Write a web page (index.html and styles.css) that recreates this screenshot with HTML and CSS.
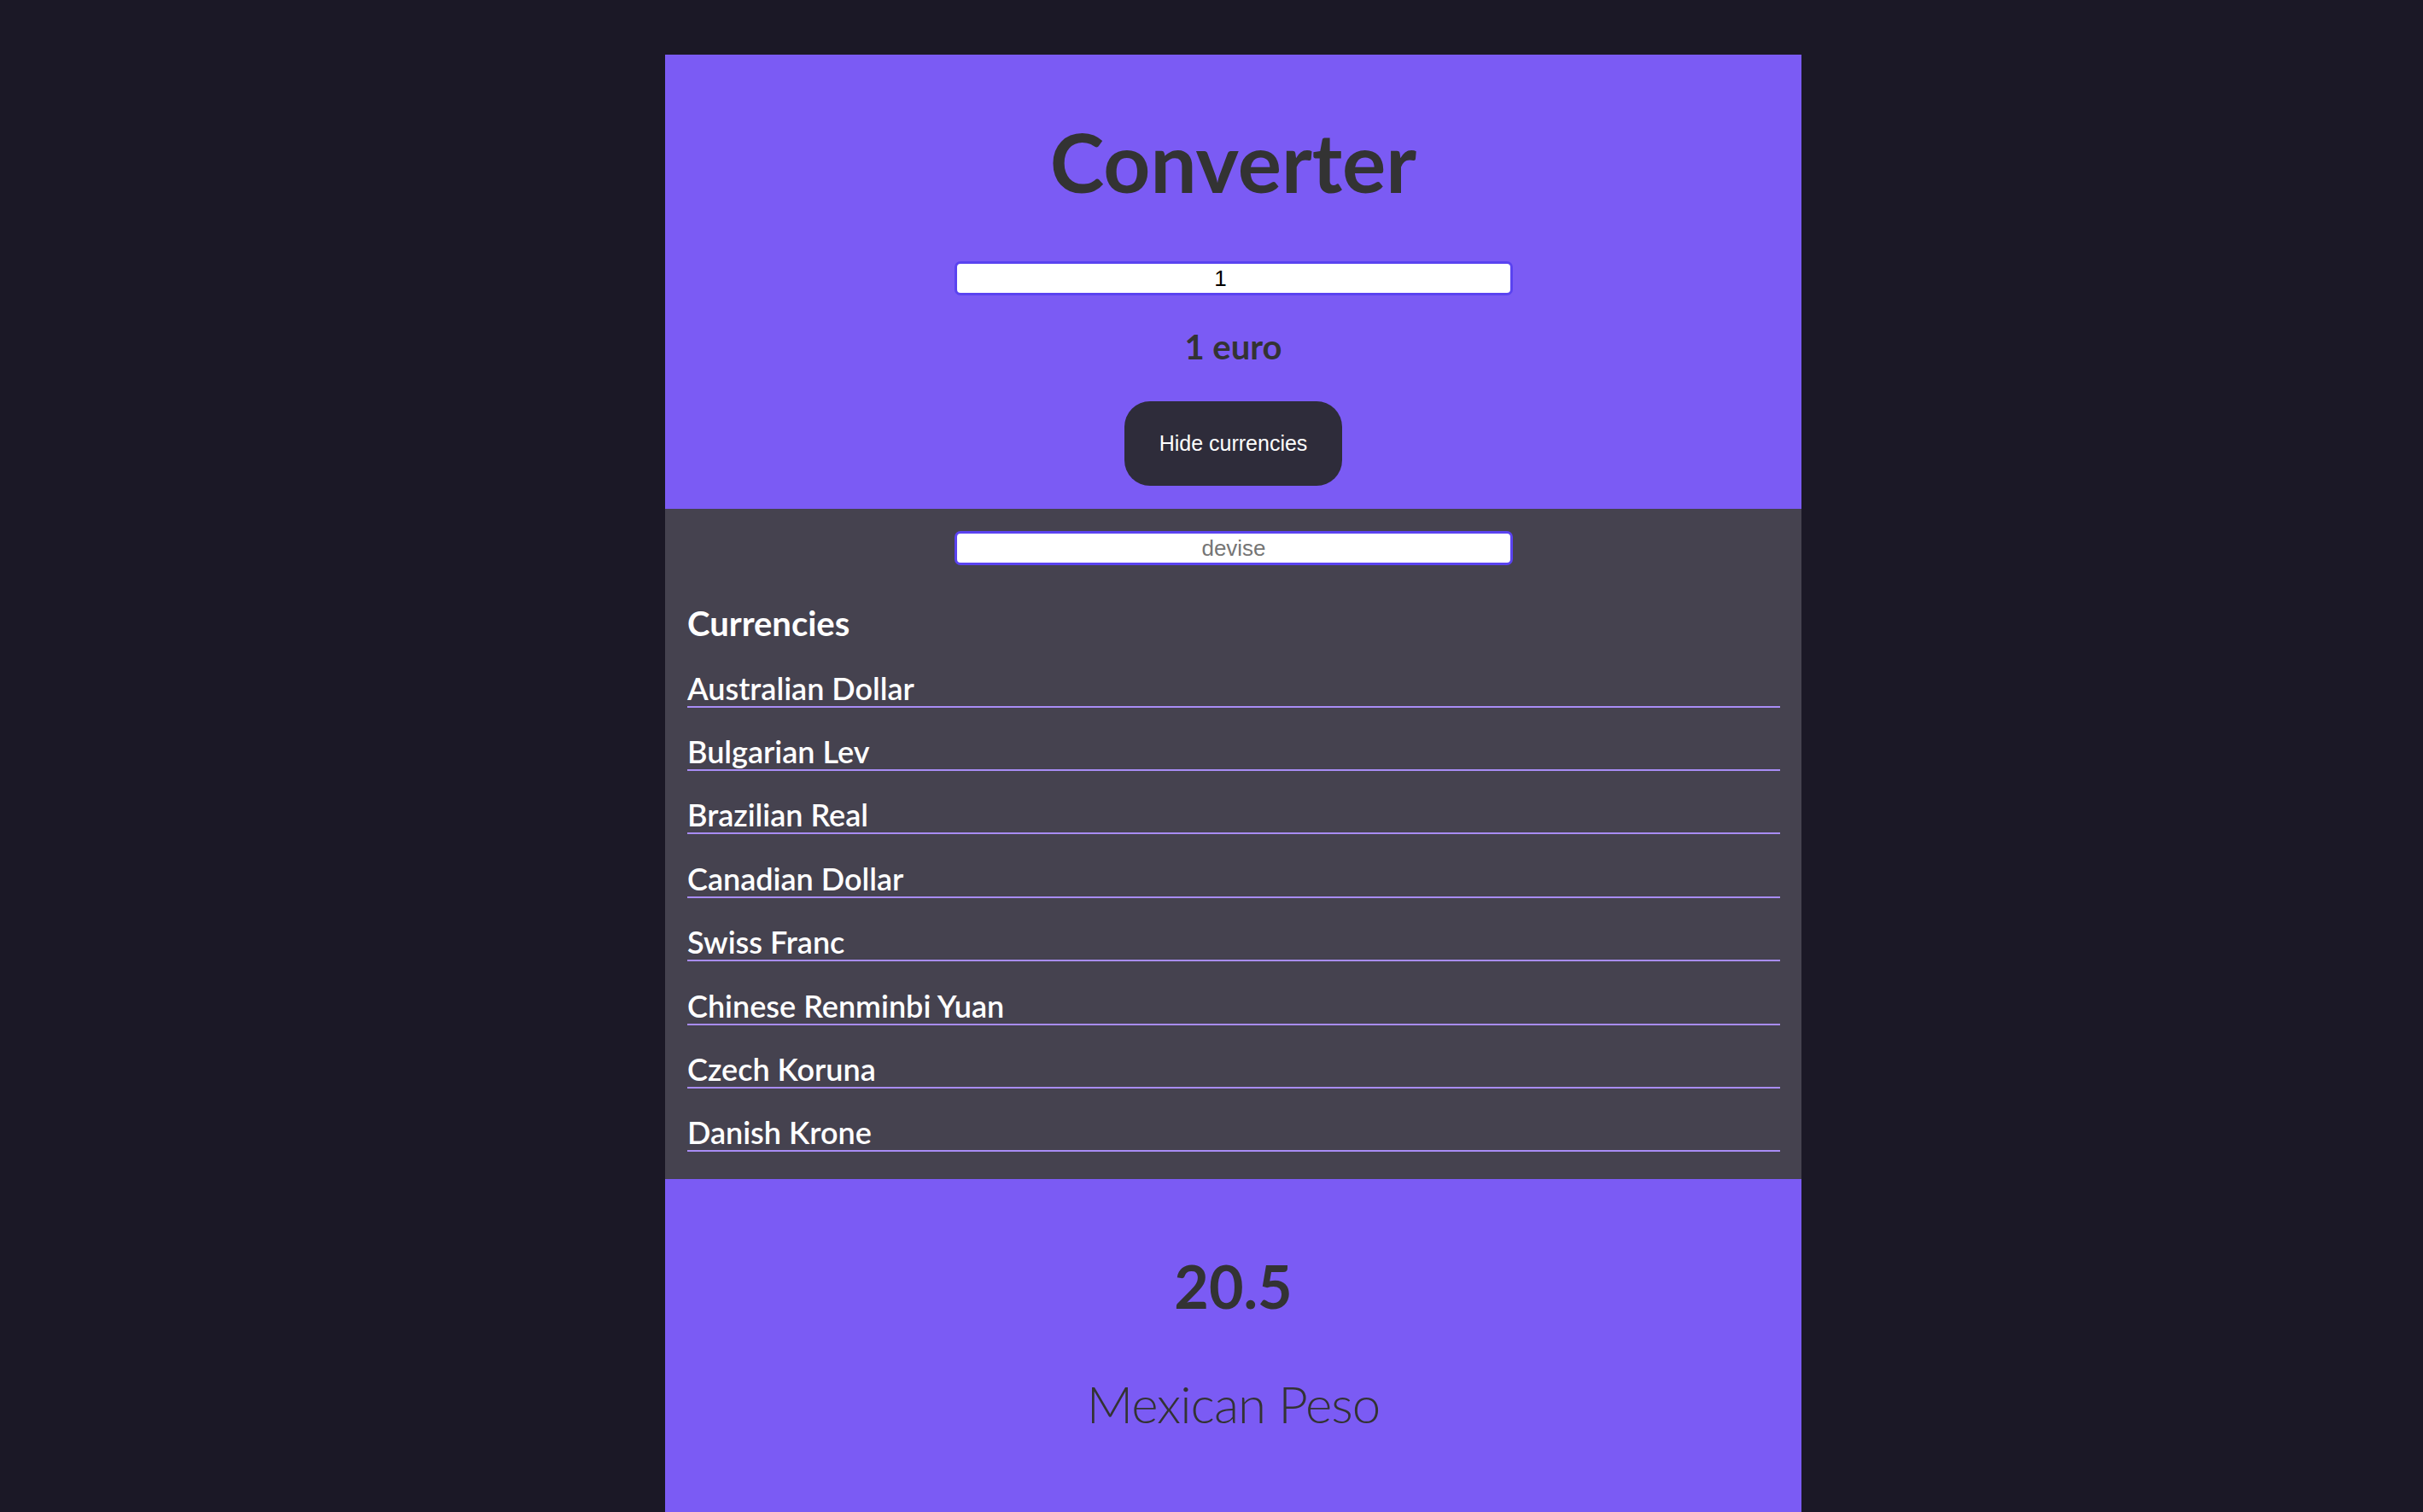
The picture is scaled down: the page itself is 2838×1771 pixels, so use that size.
FILE: index.html
```html
<!DOCTYPE html>
<html lang="en">
<head>
<meta charset="utf-8">
<title>Converter</title>
<link rel="stylesheet" href="styles.css">
</head>
<body>
<main class="app">
  <section class="hero">
    <h1 class="title">Converter</h1>
    <input class="field amount-field" type="text" value="1">
    <p class="euro">1 euro</p>
    <button class="toggle" type="button">Hide currencies</button>
  </section>
  <section class="currencies">
    <input class="field search" type="text" placeholder="devise">
    <h2 class="heading">Currencies</h2>
    <ul class="list">
      <li class="item">Australian Dollar</li>
      <li class="item">Bulgarian Lev</li>
      <li class="item">Brazilian Real</li>
      <li class="item">Canadian Dollar</li>
      <li class="item">Swiss Franc</li>
      <li class="item">Chinese Renminbi Yuan</li>
      <li class="item">Czech Koruna</li>
      <li class="item">Danish Krone</li>
    </ul>
  </section>
  <section class="result">
    <p class="amount">20.5</p>
    <p class="target">Mexican Peso</p>
  </section>
</main>
</body>
</html>
```
FILE: styles.css
```css
html, body {
  margin: 0;
  padding: 0;
}
body {
  background: #1b1826;
  min-height: 100vh;
  font-family: "Lato", "Liberation Sans", sans-serif;
  overflow: hidden;
}
.app {
  width: 1331px;
  margin: 64px 0 0 779px;
}
.hero {
  background: #7b5bf4;
  display: flex;
  flex-direction: column;
  align-items: center;
  padding: 67px 0 27px;
}
.title {
  margin: 0;
  font: 700 96px/1.2 "Lato", sans-serif;
  color: #333333;
}
.field {
  box-sizing: border-box;
  width: 654px;
  height: 40px;
  border: 3px solid #5a43f0;
  border-radius: 7px;
  background: #ffffff;
  text-align: center;
  font: 26px "Liberation Sans", Arial, sans-serif;
  color: #000000;
  padding: 0 4px;
  outline: none;
}
.hero .field {
  margin-top: 60px;
}
.amount-field {
  padding-right: 34px;
}
.field::placeholder {
  color: #757575;
}
.euro {
  margin: 35.5px 0 0;
  font: 700 40px/1.2 "Lato", sans-serif;
  color: #333333;
}
.toggle {
  margin-top: 40.5px;
  height: 99px;
  padding: 0 41px;
  border: none;
  border-radius: 30px;
  background: #2e2c3a;
  color: #ffffff;
  font: 25px "Liberation Sans", Arial, sans-serif;
}
.currencies {
  background: #45424f;
  padding: 26px 25px 32px 26px;
}
.search {
  display: block;
  margin: 0 auto;
}
.heading {
  margin: 44px 0 0;
  font: 700 40px/48px "Lato", sans-serif;
  color: #ffffff;
}
.list {
  list-style: none;
  margin: 0;
  padding: 0;
}
.item {
  margin-top: 31.4px;
  padding-bottom: 1px;
  font: 600 36px/40px "Lato", sans-serif;
  color: #ffffff;
  border-bottom: 2px solid #a88cf5;
}
.result {
  background: #7b5bf4;
  padding: 83px 0 200px;
  text-align: center;
  color: #333333;
}
.amount {
  margin: 0;
  font: 700 70px/1.2 "Lato", sans-serif;
}
.target {
  margin: 60px 0 0;
  font: 300 60px/1.2 "Lato", sans-serif;
  letter-spacing: -1px;
}
```
